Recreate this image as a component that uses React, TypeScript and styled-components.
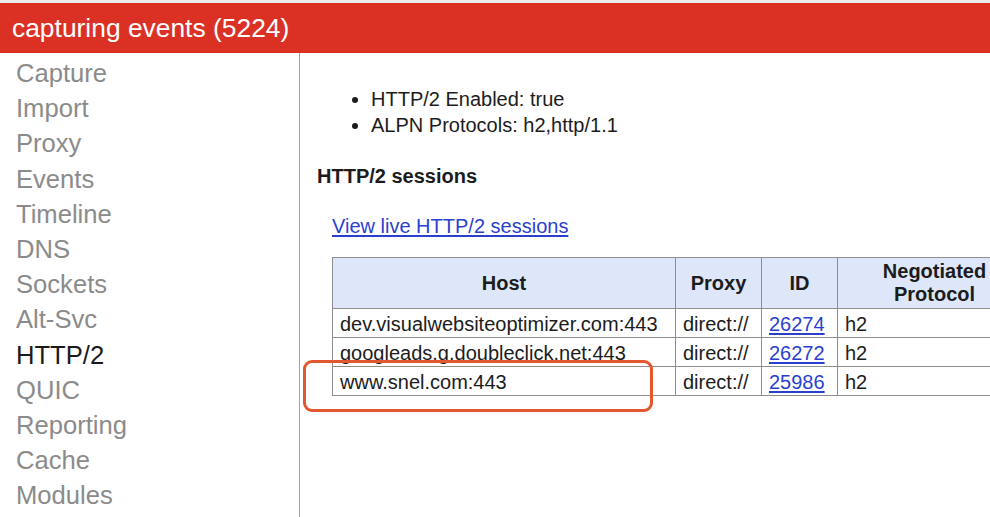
import React from "react";
import styled, { createGlobalStyle } from "styled-components";

const Global = createGlobalStyle`
  html, body {
    margin: 0;
    padding: 0;
    background: #ffffff;
    overflow: hidden;
  }
  body {
    font-family: "Liberation Sans", Arial, Helvetica, sans-serif;
    color: #1c1c1c;
  }
`;

const Page = styled.div`
  width: 990px;
  height: 517px;
  display: flex;
  flex-direction: column;
  overflow: hidden;
  position: relative;
`;

const TopBar = styled.header`
  height: 50px;
  border-top: 3px solid #ececec;
  background: #db3125;
  color: #ffffff;
  font-size: 26.4px;
  line-height: 51px;
  padding-left: 12px;
  flex: none;
  white-space: nowrap;
`;

const Body = styled.div`
  flex: 1;
  display: flex;
  min-height: 0;
`;

const Sidebar = styled.nav`
  width: 300px;
  flex: none;
  border-right: 1px solid #a3a3a3;
  padding: 3px 0 0 16px;
  box-sizing: border-box;
  display: flex;
  flex-direction: column;
`;

const NavItem = styled.div<{ $active?: boolean }>`
  font-size: 25.6px;
  line-height: 35.2px;
  color: ${(p) => (p.$active ? "#1a1a1a" : "#8b8b8b")};
  white-space: nowrap;
`;

const Main = styled.main`
  flex: 1;
  min-width: 0;
  overflow: hidden;
  padding: 33px 0 0 17px;
  font-size: 20px;
`;

const Bullets = styled.ul`
  margin: 0;
  padding-left: 54px;
  list-style: disc;
  li {
    line-height: 26px;
  }
`;

const Heading = styled.h4`
  margin: 26px 0 0 0;
  font-size: 20px;
  line-height: 24px;
  font-weight: bold;
`;

const Indented = styled.div`
  margin-left: 15px;
`;

const LiveLink = styled.a`
  display: block;
  margin-top: 26px;
  line-height: 24px;
  color: #2b3fcf;
  text-decoration: underline;
  text-underline-offset: 2px;
`;

const Table = styled.table`
  margin-top: 19px;
  border-collapse: collapse;
  table-layout: fixed;
  width: 699px;
  font-size: 20px;
`;

const Th = styled.th`
  background: #dde7f9;
  border: 1px solid #8e8e8e;
  font-weight: bold;
  text-align: center;
  line-height: 23px;
  padding: 2px 7px 2px;
  height: 46px;
`;

const Td = styled.td`
  border: 1px solid #8e8e8e;
  line-height: 22px;
  padding: 4px 7px 2px;
  white-space: nowrap;
  overflow: hidden;
`;

const IdLink = styled.a`
  color: #2b3fcf;
  text-decoration: underline;
  text-underline-offset: 2px;
`;

const Highlight = styled.div`
  position: absolute;
  left: 303px;
  top: 360px;
  width: 350px;
  height: 52px;
  border: 3px solid #e3572f;
  border-radius: 9px;
  box-sizing: border-box;
  pointer-events: none;
`;

const navItems = [
  "Capture",
  "Import",
  "Proxy",
  "Events",
  "Timeline",
  "DNS",
  "Sockets",
  "Alt-Svc",
  "HTTP/2",
  "QUIC",
  "Reporting",
  "Cache",
  "Modules",
];

const sessions = [
  { host: "dev.visualwebsiteoptimizer.com:443", proxy: "direct://", id: "26274", proto: "h2" },
  { host: "googleads.g.doubleclick.net:443", proxy: "direct://", id: "26272", proto: "h2" },
  { host: "www.snel.com:443", proxy: "direct://", id: "25986", proto: "h2" },
];

export default function App() {
  return (
    <Page>
      <Global />
      <TopBar>capturing events (5224)</TopBar>
      <Body>
        <Sidebar>
          {navItems.map((n) => (
            <NavItem key={n} $active={n === "HTTP/2"}>
              {n}
            </NavItem>
          ))}
        </Sidebar>
        <Main>
          <Bullets>
            <li>HTTP/2 Enabled: true</li>
            <li>ALPN Protocols: h2,http/1.1</li>
          </Bullets>
          <Heading>HTTP/2 sessions</Heading>
          <Indented>
            <LiveLink href="#">View live HTTP/2 sessions</LiveLink>
            <Table>
              <colgroup>
                <col style={{ width: 343 }} />
                <col style={{ width: 86 }} />
                <col style={{ width: 76 }} />
                <col style={{ width: 194 }} />
              </colgroup>
              <thead>
                <tr>
                  <Th>Host</Th>
                  <Th>Proxy</Th>
                  <Th>ID</Th>
                  <Th>
                    Negotiated
                    <br />
                    Protocol
                  </Th>
                </tr>
              </thead>
              <tbody>
                {sessions.map((s) => (
                  <tr key={s.id}>
                    <Td>{s.host}</Td>
                    <Td>{s.proxy}</Td>
                    <Td>
                      <IdLink href="#">{s.id}</IdLink>
                    </Td>
                    <Td>{s.proto}</Td>
                  </tr>
                ))}
              </tbody>
            </Table>
          </Indented>
        </Main>
      </Body>
      <Highlight />
    </Page>
  );
}
